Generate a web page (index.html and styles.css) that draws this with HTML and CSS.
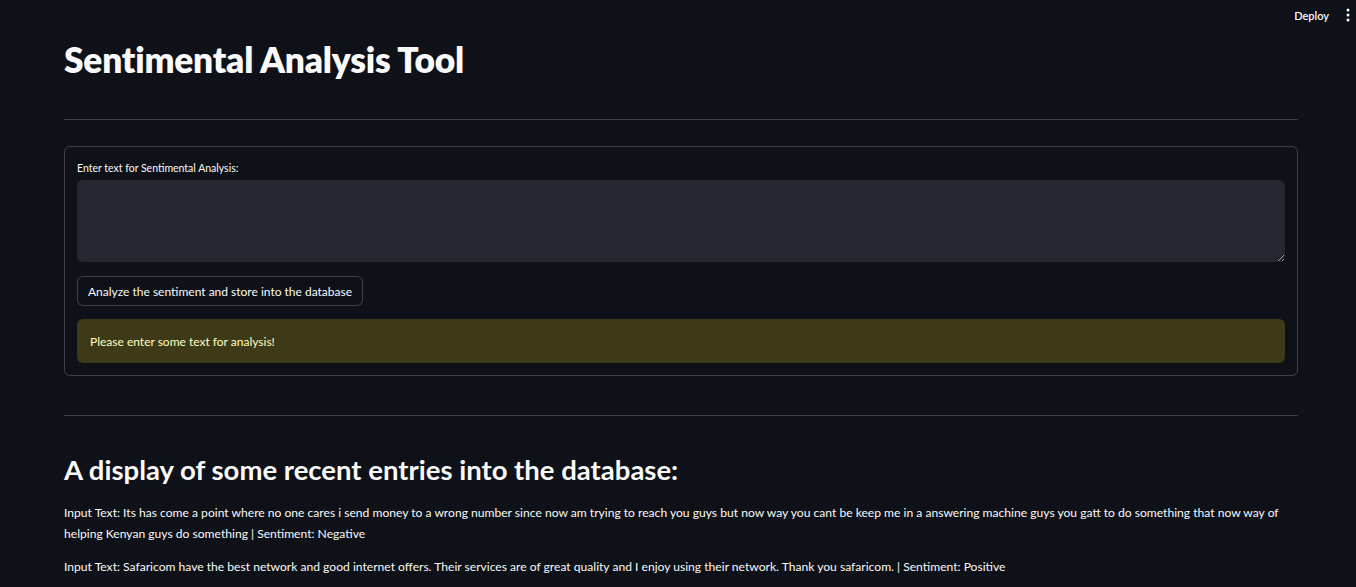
FILE: index.html
```html
<!DOCTYPE html>
<html>
<head>
<meta charset="utf-8">
<link rel="stylesheet" href="styles.css">
</head>
<body>
<header class="topbar">
  <span class="deploy">Deploy</span>
  <span class="menu">
    <svg width="4" height="14" viewBox="0 0 4 14"><circle cx="2" cy="2" r="1.5" fill="#fafafa"/><circle cx="2" cy="7" r="1.5" fill="#fafafa"/><circle cx="2" cy="12" r="1.5" fill="#fafafa"/></svg>
  </span>
</header>
<main class="main">
  <h1 class="title">Sentimental Analysis Tool</h1>
  <hr class="divider first">
  <section class="form">
    <label class="label">Enter text for Sentimental Analysis:</label>
    <textarea class="input"></textarea>
    <div class="btnrow"><button class="btn">Analyze the sentiment and store into the database</button></div>
    <div class="warning">Please enter some text for analysis!</div>
  </section>
  <hr class="divider second">
  <h2 class="subtitle">A display of some recent entries into the database:</h2>
  <p class="entry">Input Text: Its has come a point where no one cares i send money to a wrong number since now am trying to reach you guys but now way you cant be keep me in a answering machine guys you gatt to do something that now way of helping Kenyan guys do something | Sentiment: Negative</p>
  <p class="entry">Input Text: Safaricom have the best network and good internet offers. Their services are of great quality and I enjoy using their network. Thank you safaricom. | Sentiment: Positive</p>
</main>
</body>
</html>
```
FILE: styles.css
```css
html, body {
  margin: 0;
  padding: 0;
  background: #0e1117;
  color: #fafafa;
  font-family: "Lato", "Liberation Sans", sans-serif;
  height: 587px;
  overflow: hidden;
}
.topbar {
  position: absolute;
  top: 0;
  right: 0;
  height: 30px;
  display: flex;
  align-items: center;
  gap: 17px;
  padding-right: 6px;
}
.deploy {
  font-size: 11px;
  font-weight: 600;
}
.menu { display: flex; align-items: center; }
.main {
  padding: 36px 58px 0 64px;
}
.title {
  margin: 0;
  font-size: 35.3px;
  font-weight: 800;
  line-height: 48px;
  letter-spacing: -0.2px;
}
.divider {
  border: none;
  border-top: 1px solid rgba(250,250,250,0.2);
  margin: 0;
}
.divider.first { margin-top: 35px; }
.form {
  margin-top: 26px;
  border: 1px solid rgba(250,250,250,0.2);
  border-radius: 6px;
  padding: 14px 12px 12px 12px;
  display: flex;
  flex-direction: column;
}
.label {
  font-size: 10.5px;
  line-height: 14px;
  margin-bottom: 5px;
}
.input {
  height: 82px;
  background: #262730;
  border: none;
  border-radius: 6px;
  resize: vertical;
  box-sizing: border-box;
  outline: none;
}
.btnrow { margin-top: 14px; }
.btn {
  background: #0e1117;
  color: #fafafa;
  border: 1px solid rgba(250,250,250,0.2);
  border-radius: 6px;
  font-family: inherit;
  font-size: 12px;
  height: 30px;
  padding: 0 10px;
}
.warning {
  margin-top: 13px;
  background: #3e3a17;
  color: #ffffc2;
  border-radius: 6px;
  height: 44px;
  display: flex;
  align-items: center;
  padding: 0 13px;
  font-size: 12px;
}
.divider.second { margin-top: 39px; }
.subtitle {
  margin: 34px 0 0 0;
  font-size: 27.5px;
  font-weight: 700;
  line-height: 40px;
}
.entry {
  margin: 12px 0 0 0;
  font-size: 12.1px;
  line-height: 21px;
}
.entry + .entry { margin-top: 12px; }
```
